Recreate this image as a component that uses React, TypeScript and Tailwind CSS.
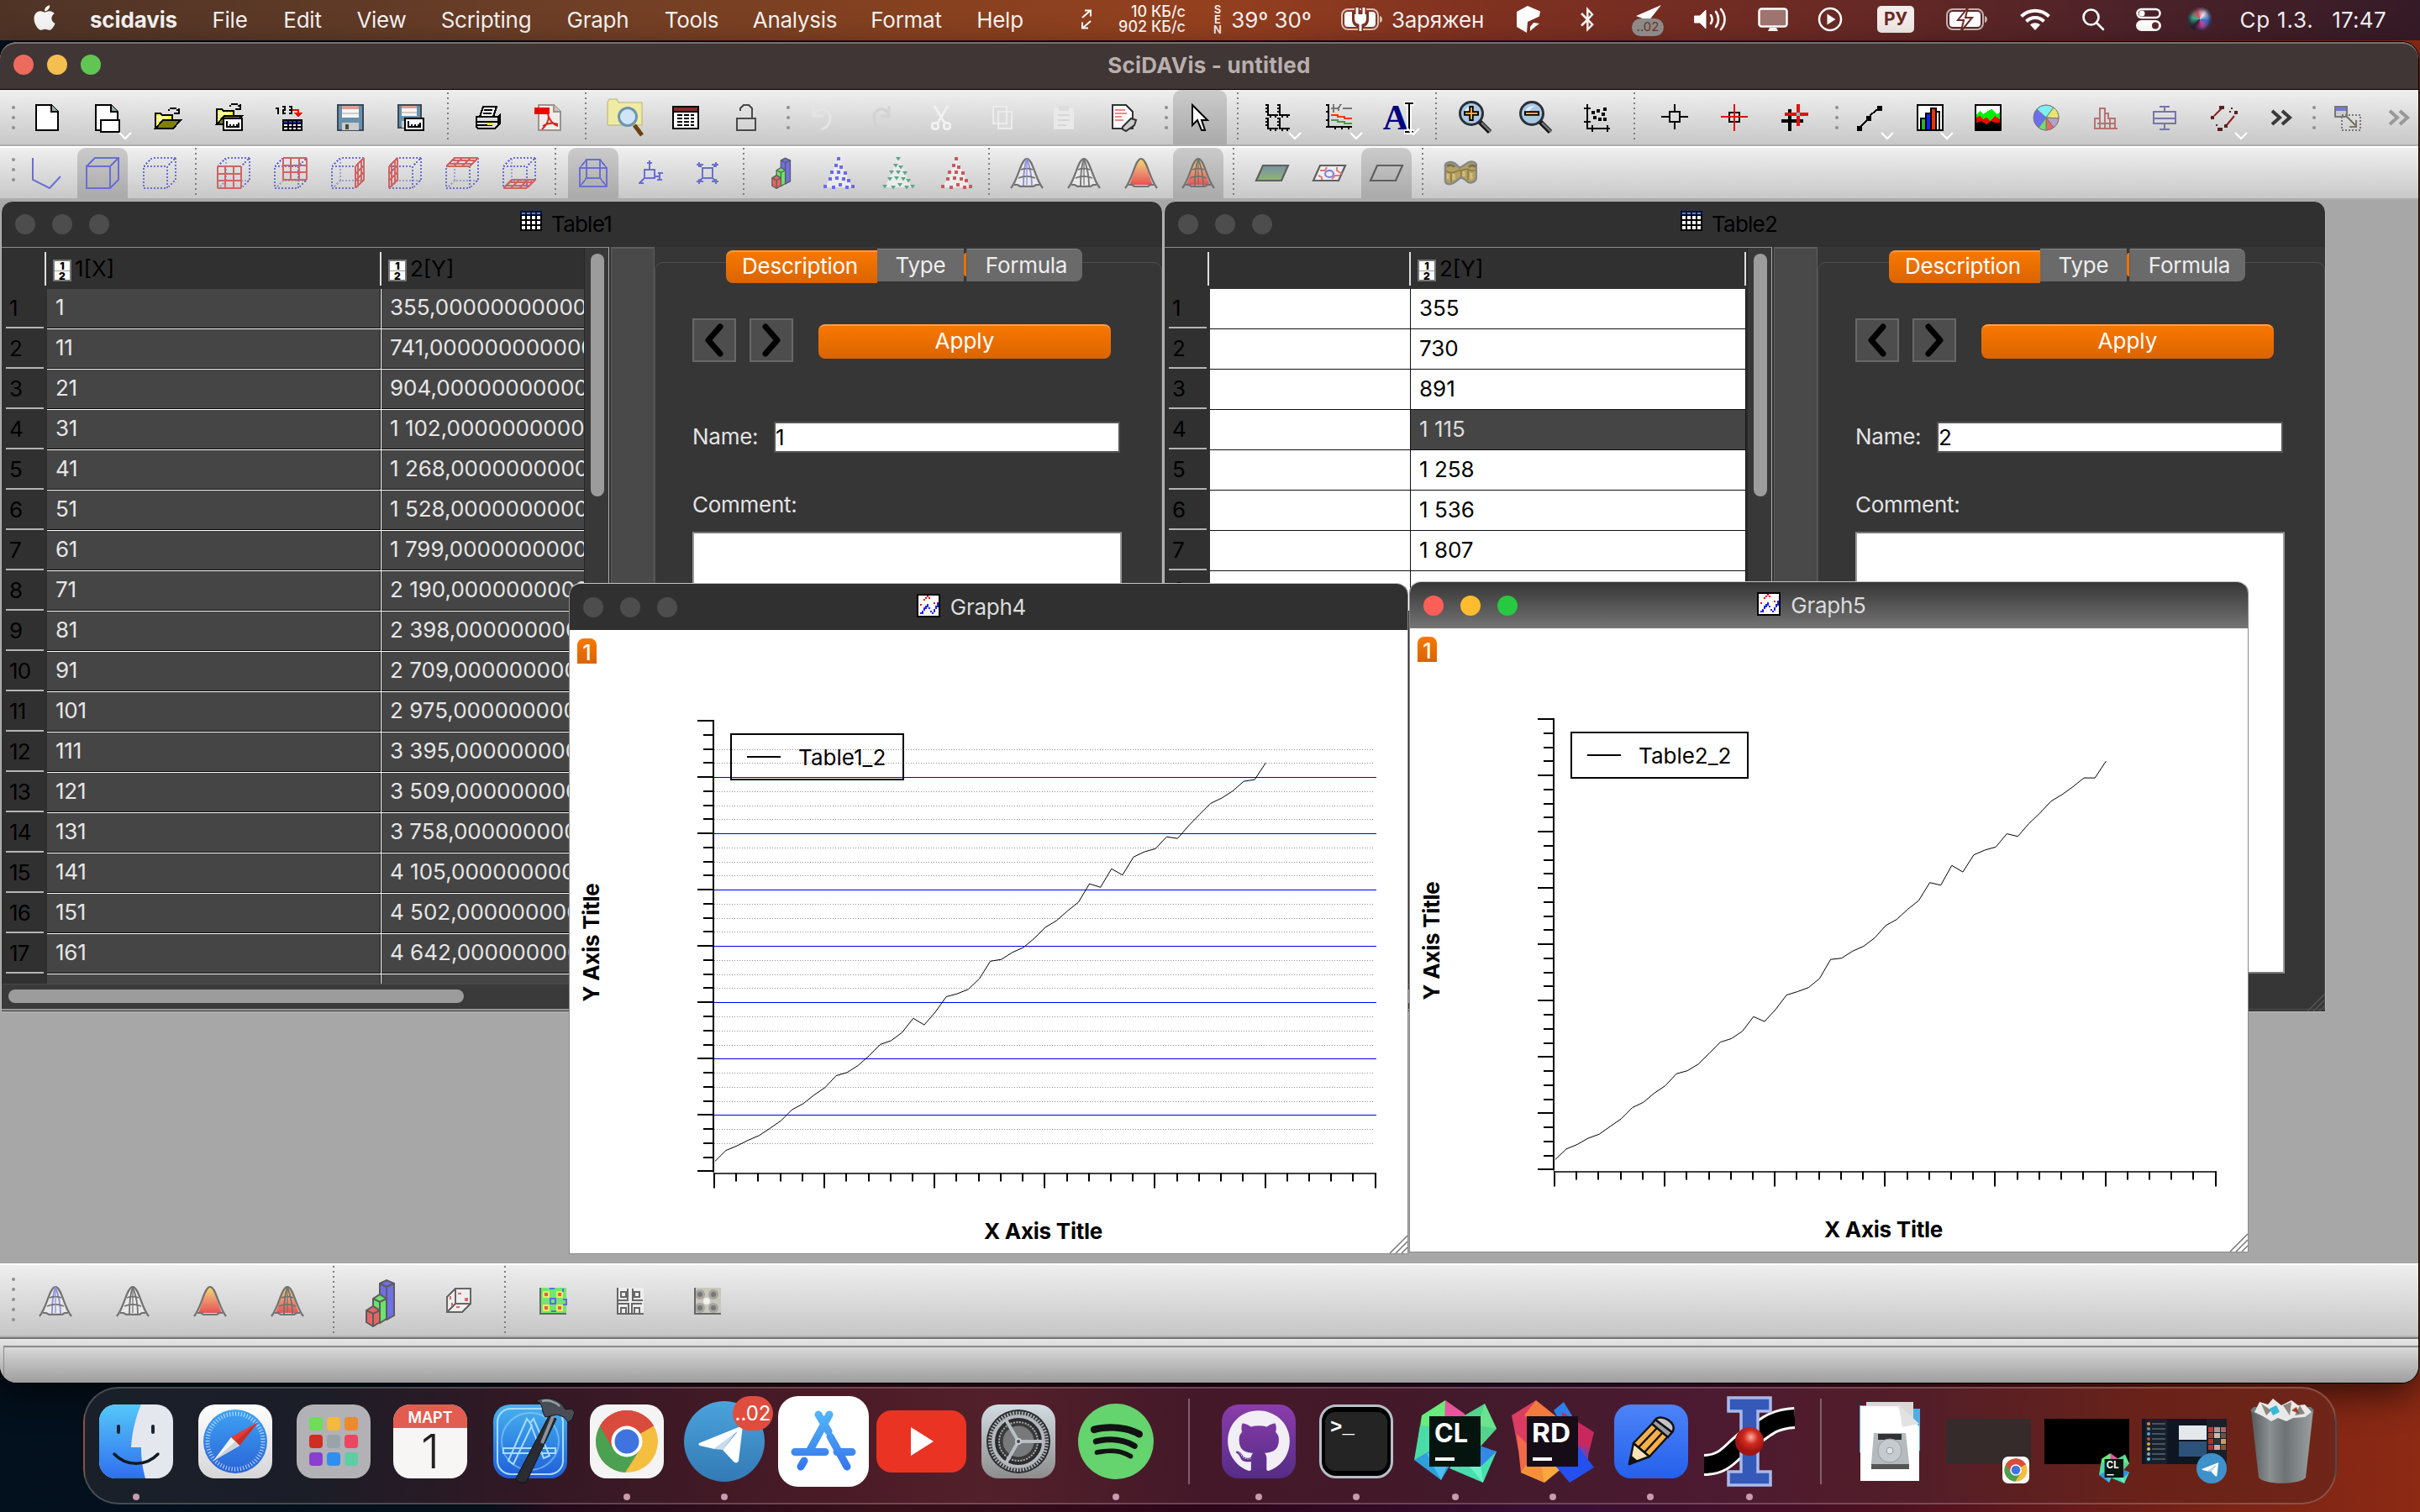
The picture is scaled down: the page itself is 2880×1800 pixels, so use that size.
import React from 'react';
import { FaApple, FaBluetoothB, FaGithub, FaSpotify, FaTelegramPlane } from 'react-icons/fa';

type Cell = [center: number, width: number, node: React.ReactNode];

/* A row whose items are spaced by their centres, in flow. */
function Strip({ items, className = '' }: { items: Cell[]; className?: string }) {
  let edge = 0;
  return (
    <div className={'flex h-full items-center ' + className}>
      {items.map(([c, w, node], i) => {
        const ml = c - w / 2 - edge;
        edge = c + w / 2;
        return (
          <div key={i} className="flex h-full shrink-0 items-center justify-center whitespace-nowrap" style={{ marginLeft: ml, width: w }}>
            {node}
          </div>
        );
      })}
    </div>
  );
}

/* ---------- menu bar ---------- */

const Plug = () => (
  <svg width="50" height="32" viewBox="0 0 50 32" fill="none">
    <rect x="1" y="4" width="43" height="24" rx="7" stroke="#d9c3bb" strokeWidth="2" />
    <rect x="4" y="7" width="37" height="18" rx="4" fill="#fff" />
    <path d="M46 12v8c4-1 4-7 0-8z" fill="#d9c3bb" />
    <path d="M19 0v10M27 0v10M16 10h14v6c0 5-3 7-7 7s-7-2-7-7zM23 22v10" stroke="#7a3220" strokeWidth="6" />
    <path d="M19 2v9M27 2v9M23 20v10" stroke="#fff" strokeWidth="3" />
    <path d="M16 10h14v5c0 5-3 7-7 7s-7-2-7-7z" fill="#fff" />
  </svg>
);
const Battery = () => (
  <svg width="50" height="28" viewBox="0 0 50 28" fill="none">
    <rect x="1" y="2" width="43" height="24" rx="7" stroke="#c9b1ad" strokeWidth="2" />
    <rect x="4" y="5" width="37" height="18" rx="4" fill="#fff" />
    <path d="M46 10v8c4-1 4-7 0-8z" fill="#c9b1ad" />
    <path d="M26 0L14 15h7l-3 13 13-16h-8z" fill="#fff" stroke="#6b2a24" strokeWidth="2" />
  </svg>
);
const Volume = () => (
  <svg width="40" height="28" viewBox="0 0 40 28" fill="none" stroke="#fff" strokeWidth="2.6" strokeLinecap="round">
    <path d="M1 10h6l7-7v22l-7-7H1z" fill="#fff" strokeWidth="1" strokeLinejoin="round" />
    <path d="M20 9c2 3 2 7 0 10M26 5c4 5 4 13 0 18M32 2c6 7 6 17 0 24" />
  </svg>
);
const Display = () => (
  <svg width="36" height="30" viewBox="0 0 36 30">
    <rect x="1.500" y="2.500" width="33" height="21" rx="3" fill="#fff" fillOpacity=".35" stroke="#fff" strokeWidth="2.500" />
    <path d="M12 29h12l-2-4h-8z" fill="#fff" />
  </svg>
);
const PlayCircle = () => (
  <svg width="30" height="30" viewBox="0 0 30 30">
    <circle cx="15" cy="15" r="13" fill="none" stroke="#fff" strokeWidth="2.500" />
    <path d="M11.500 8.500v13l10-6.500z" fill="#fff" />
  </svg>
);
const Wifi = () => (
  <svg width="38" height="28" viewBox="0 0 38 28" fill="none" stroke="#fff" strokeWidth="4">
    <path d="M2.500 10.500c9.500-9 23.500-9 33 0M8.500 16.500c6-6 15-6 21 0" />
    <path d="M19 27l-6-6.500c3.500-3 8.500-3 12 0z" fill="#fff" stroke="none" />
  </svg>
);
const Search = () => (
  <svg width="28" height="28" viewBox="0 0 28 28" fill="none" stroke="#fff" strokeWidth="2.700" strokeLinecap="round">
    <circle cx="11.500" cy="11.500" r="9" />
    <path d="M18 18l8 8" />
  </svg>
);
const Controls = () => (
  <svg width="30" height="28" viewBox="0 0 30 28">
    <rect x="1.500" y="2" width="27" height="10" rx="5" fill="none" stroke="#fff" strokeWidth="2.500" />
    <circle cx="7" cy="7" r="3.500" fill="#fff" />
    <rect x="0" y="15" width="30" height="13" rx="6.500" fill="#fff" />
    <circle cx="23" cy="21.500" r="4" fill="#5b2726" />
  </svg>
);
const Hex = () => (
  <svg width="30" height="32" viewBox="0 0 30 32" fill="#fff">
    <path d="M14 0l15 6.500-1 6L14 19l-1 13L1 25V7z" />
    <path d="M17 25l4-5 7 1-4 3-7 6z" />
  </svg>
);

function MenuBar() {
  const m = (s: string) => <span className="tracking-[-0.01em]">{s}</span>;
  const items: Cell[] = [
    [53, 30, <FaApple size={34} className="-mt-1" />],
    [159, 106, <span className="font-bold tracking-[-0.005em]">scidavis</span>],
    [273.5, 44, m('File')],
    [360, 48, m('Edit')],
    [454, 60, m('View')],
    [578.5, 110, m('Scripting')],
    [711.5, 74, m('Graph')],
    [823, 64, m('Tools')],
    [946, 100, m('Analysis')],
    [1078.5, 88, m('Format')],
    [1190, 56, m('Help')],
    [1293, 14, (
      <svg width="14" height="24" viewBox="0 0 14 24" fill="none" stroke="#fff" strokeWidth="2">
        <path d="M2 10L11 2M5 1.500h7v7M12 14L3 22M9 22.500H2v-7" />
      </svg>
    )],
    [1366, 90, (
      <div className="w-full text-right text-[18px] leading-[18px] font-medium">
        <div>10 КБ/с</div>
        <div>902 КБ/с</div>
      </div>
    )],
    [1449, 12, (
      <div className="text-center text-[13px] leading-[12px] font-semibold">
        <div>S</div><div>E</div><div>N</div>
      </div>
    )],
    [1513, 96, <span>39º 30º</span>],
    [1621, 50, <Plug />],
    [1711, 112, <span className="tracking-[-0.01em]">Заряжен</span>],
    [1819, 30, <Hex />],
    [1889, 22, <FaBluetoothB size={30} />],
    [1962, 40, (
      <div className="relative flex h-10 w-10 items-start justify-center">
        <svg width="34" height="28" viewBox="0 0 34 28"><path d="M32 3L2 16l8 3 3 8z" fill="#fff" /></svg>
        <span className="absolute bottom-0 left-0 flex h-[21px] w-[38px] items-center justify-center rounded-full bg-[#8d8a89] text-[15px] text-[#6d3328]">..02</span>
      </div>
    )],
    [2036, 40, <Volume />],
    [2110, 36, <Display />],
    [2178, 30, <PlayCircle />],
    [2256, 44, <span className="flex h-8 w-[44px] items-center justify-center rounded-[5px] bg-[#f3ecea] text-[21px] font-bold text-[#6b2a24]">РУ</span>],
    [2341, 50, <Battery />],
    [2422, 38, <Wifi />],
    [2491, 28, <Search />],
    [2557, 30, <Controls />],
    [2618, 30, <span className="h-[28px] w-[28px] rounded-full bg-[conic-gradient(from_40deg,#cfd8e8,#3b6fd0,#c7489a,#2a1f33,#3cb48a,#d04f5f,#eef)] shadow-[inset_0_0_5px_2px_#1d1a28]" />],
    [2709.5, 92, <span className="tracking-[0.03em]">Ср 1.3.</span>],
    [2807.5, 70, <span className="tracking-[0.01em]">17:47</span>],
  ];
  return (
    <div className="h-12 shrink-0 bg-[linear-gradient(90deg,#4f3426_0%,#5f3a27_14%,#6f3f26_24%,#86411f_38%,#94401f_50%,#823220_60%,#6b2a24_75%,#4c2229_88%,#351b27_100%)] text-[26px] text-white/95">
      <Strip items={items} className="pb-0.5" />
    </div>
  );
}

/* ---------- toolbar icons ---------- */

function Px({ children, s = 32, v = 16, h }: { children: React.ReactNode; s?: number; v?: number; h?: number }) {
  return (
    <svg width={s} height={h ?? s} viewBox={`0 0 ${v} ${h ? (v * h) / s : v}`} shapeRendering="crispEdges" fill="none" className="shrink-0 overflow-visible">
      {children}
    </svg>
  );
}
const Page = ({ x = 1, y = 0 }: { x?: number; y?: number }) => (
  <g transform={`translate(${x} ${y})`}>
    <path d="M.5 .5h9l4 4v11H.5z" fill="#fff" stroke="#000" />
    <path d="M9.500 .5v4h4" fill="#9aa" stroke="#000" />
  </g>
);
const Folder = () => (
  <g>
    <path d="M.5 14.500v-9h3l1 1h6v4" fill="#ffff44" stroke="#000" />
    <path d="M1 7h1v1H1zM3 7h1v1H3zM5 7h1v1H5zM7 7h1v1H7zM2 8h1v1H2zM4 8h1v1H4zM6 8h1v1H6zM1 9h1v1H1zM3 9h1v1H3zM1 11h1v1H1z" fill="#fff" />
    <path d="M.5 14.500L5 9.500h10.500L11 14.500z" fill="#808008" stroke="#000" />
    <path d="M8 3.500h1M9 2.500h4M13.500 3v1M14.500 2.500v3h-3" stroke="#000" />
  </g>
);
const Floppy = () => (
  <g>
    <path d="M.5 .5h15v15H.5z" fill="#6790ad" stroke="#3a4854" />
    <path d="M3 1h10v7H3z" fill="#f6f6f6" />
    <path d="M3 1h10v2H3z" fill="#e59b92" />
    <path d="M3 5.500h10" stroke="#ccc" />
    <path d="M3 11h10v4.500H3z" fill="#ccc" />
    <path d="M5 12h2v3H5z" fill="#4b4b3a" />
  </g>
);
const MiniPlot = () => (
  <g>
    <path d="M4.500 8.500h11v7h-11z" fill="#fff" stroke="#000" />
    <path d="M6.500 10v3.500H14M8.500 13v-1M10.500 13v-1M12.500 13v-1M13.500 13v-2" stroke="#000" />
  </g>
);
const Glass = ({ plus }: { plus: boolean }) => (
  <svg width="42" height="42" viewBox="0 0 42 42">
    <path d="M26 26l12 12" stroke="#111" strokeWidth="6" />
    <path d="M28 27l11 11" stroke="#6f7376" strokeWidth="2.500" />
    <circle cx="16" cy="16" r="13.500" fill="#a9c8e4" stroke="#2a3036" strokeWidth="3" />
    <path d="M8 20C6 12 12 6 20 7c-6 3-8 8-12 13z" fill="#e3eff8" />
    <path d="M7 16h18" stroke="#000" strokeWidth="5.500" />
    {plus && <path d="M16 7v18" stroke="#000" strokeWidth="5.500" />}
    <path d="M9 16h14" stroke="#f5ad35" strokeWidth="2" />
    {plus && <path d="M16 9v14" stroke="#f5ad35" strokeWidth="2" />}
  </svg>
);
const Handle = () => (
  <div className="flex flex-col gap-2">
    <i className="h-1 w-1 rounded-full bg-[#8f8f8f]" />
    <i className="h-1 w-1 rounded-full bg-[#8f8f8f]" />
    <i className="h-1 w-1 rounded-full bg-[#8f8f8f]" />
  </div>
);
const Sep = () => <div className="mb-1 h-14 w-0.5 bg-[repeating-linear-gradient(to_bottom,#7d7d7d_0_2px,transparent_2px_6px)]" />;
const Drop = ({ children }: { children: React.ReactNode }) => (
  <div className="relative flex items-center justify-center">
    {children}
    <svg className="absolute top-[33px] left-[28px]" width="16" height="10" viewBox="0 0 16 10">
      <path d="M1 1l7 7 7-7" fill="none" stroke="#fff" strokeWidth="2.200" />
    </svg>
  </div>
);
const On = ({ children }: { children: React.ReactNode }) => (
  <div className="flex h-full w-full items-center justify-center rounded-t-[10px] bg-black/15">{children}</div>
);
const More = ({ dim }: { dim?: boolean }) => (
  <svg width="28" height="20" viewBox="0 0 28 20" fill="none" stroke={dim ? '#999' : '#3a3a3a'} strokeWidth="4">
    <path d="M2 2l9 8-9 8M14 2l9 8-9 8" />
  </svg>
);

const toolbar1: Cell[] = [
  [16, 4, <Handle />],
  [56, 34, <Px><Page /></Px>],
  [129, 34, <Drop><Px><Page x={0} /><path d="M3.500 9.500h11v7h-11z" fill="#fff" stroke="#000" /></Px></Drop>],
  [200, 34, <Px><Folder /></Px>],
  [273, 34, <Px><g transform="translate(0 -2.500)"><Folder /></g><MiniPlot /></Px>],
  [344, 34, (
    <Px>
      <path d="M0 2.500h1.500V6M4 1.500h1.500v2H4.500V5.500H6M8 1.500h1.500V5.500H8M8 3.500h2" stroke="#000" />
      <path d="M10 3.500h3.500v2" stroke="#f00" /><path d="M11 5h5l-2.500 3z" fill="#f00" />
      <path d="M4.500 9.500h11v6h-11z" fill="#fff" stroke="#000" /><path d="M5 10h10v1H5z" fill="#33e" />
      <path d="M5 11.500h10M5 13.500h10M7.500 9v7M10 9v7M12.500 9v7" stroke="#000" />
    </Px>
  )],
  [417, 34, <Px><Floppy /></Px>],
  [489, 34, <Px><g transform="scale(.9)"><Floppy /></g><MiniPlot /></Px>],
  [533, 4, <Sep />],
  [580, 34, (
    <Px>
      <path d="M5.500 1.500h8l-2 6h-8z" fill="#fff" stroke="#000" /><path d="M6 3.500h5M5.500 5.500h5" stroke="#000" />
      <path d="M1.500 7.500h13v5l-2 2h-10l-1-1z" fill="#ddd" stroke="#000" /><path d="M2 10.500h12M2 12.500h9" stroke="#000" />
      <path d="M8 11h3v1.500H8z" fill="#ee0" /><path d="M14.500 7.500l1-1v5l-1 1" stroke="#000" />
    </Px>
  )],
  [652, 34, (
    <Px>
      <path d="M2.500 .5h9l4 4v11h-13z" fill="#f1eeea" stroke="#9b948c" /><path d="M11.500 .5v4h4" fill="#c9c2ba" stroke="#9b948c" />
      <path d="M0 2h9v4H0z" fill="#e00" />
      <path d="M8 6c1 4 3 6 6 7M8.500 7c0 4-2 6-4 8M5 13c3-2 6-2 9-1" stroke="#e02020" shapeRendering="auto" />
    </Px>
  )],
  [697, 4, <Sep />],
  [744, 48, (
    <svg width="46" height="46" viewBox="0 0 46 46">
      <path d="M2 32V5l2-4h9l2 4h28v27z" fill="#f0eba2" stroke="#b5b07a" />
      <circle cx="26" cy="22" r="10.500" fill="#cfe5f5" stroke="#6f94ae" strokeWidth="3" />
      <path d="M34 32l9 12" stroke="#6a4211" strokeWidth="5" />
    </svg>
  )],
  [816, 34, (
    <Px>
      <path d="M.5 1.500h15v13H.5z" fill="#fff" stroke="#000" /><path d="M1 2h14v2H1z" fill="#8a2a2a" />
      <path d="M1 4.500h14" stroke="#000" />
      <path d="M3 6.500h10M3 8.500h10M3 10.500h10M3 12.500h10" stroke="#000" strokeDasharray="3 1" />
    </Px>
  )],
  [888, 34, (
    <Px>
      <path d="M2.500 8.500h11v7h-11z" stroke="#4a4a4a" /><path d="M4.500 4V2.500l2-2h3l2 2v6" stroke="#4a4a4a" />
    </Px>
  )],
  [938, 4, <Handle />],
  [978, 34, <Px><path d="M3 1v6h6M3 6c5-6 10-2 10 2 0 4-2 6-5 7" stroke="#e4e4e4" shapeRendering="auto" strokeWidth="1.500" /></Px>],
  [1048, 34, <Px><path d="M13 1v6H8M13 6C9 0 4 4 4 8c0 4 2 6 5 7" stroke="#d3d3d3" shapeRendering="auto" strokeWidth="1.500" /></Px>],
  [1120, 34, <Px><path d="M4 1l6 10M12 1L6 11" stroke="#f0f0f0" strokeWidth="1.500" /><circle cx="4.500" cy="13" r="2" stroke="#f0f0f0" strokeWidth="1.500" /><circle cx="11.500" cy="13" r="2" stroke="#f0f0f0" strokeWidth="1.500" /></Px>],
  [1193, 34, <Px><path d="M2.500 1.500h8v10h-8zM5.500 4.500h8v10h-8z" fill="#dcdcdc" stroke="#ececec" /></Px>],
  [1266, 34, <Px><path d="M2 2h12v13H2z" fill="#e9e9e9" /><path d="M5 1h6v3H5z" fill="#ddd" /><path d="M4.500 6.500h7M4.500 9.500h7M4.500 12.500h5" stroke="#d6d6d6" /></Px>],
  [1337, 34, (
    <Px>
      <path d="M1.500 .5h8l4 4v10h-12z" fill="#fff" stroke="#333" /><path d="M3 3.500h6M3 5.500h7M3 7.500h4M3 9.500h5" stroke="#e88" />
      <path d="M7.500 13.500l5-5 3 1-1 3-5 3.500-2-1z" fill="#ccc" stroke="#333" shapeRendering="auto" />
    </Px>
  )],
  [1388, 4, <Handle />],
  [1428, 64, <On><Px><path d="M3.500 .5v12l3-3 2.500 6h2L9 9.500h3.500z" fill="#fff" stroke="#000" shapeRendering="auto" /></Px></On>],
  [1473, 4, <Sep />],
  [1521, 34, (
    <Drop>
      <Px>
        {([[0, 0], [7, 0], [0, 8], [7, 8]] as [number, number][]).map(([x, y]) => (
          <path key={`${x}-${y}`} transform={`translate(${x} ${y})`} d="M2 0v6.500h6M.5 .5h1M.5 2.500h1M.5 4.500h1M3.500 7v1M6.500 7v1" stroke="#000" strokeWidth="1.200" />
        ))}
      </Px>
    </Drop>
  )],
  [1594, 34, (
    <Drop>
      <Px>
        <path d="M1.500 0v14M0 13.500h15.500M0 .5h2M0 4.500h2M0 9.500h2M5.500 13v2M9.500 13v2M13.500 13v2" stroke="#000" />
        <path d="M3 2.500h5M4.500 0v5M7.500 4V2l1.500-2M10 2.500h5.500" stroke="#777" />
        <path d="M3 6.500h4v1h4v1h4.500" stroke="#f30" strokeWidth="1.200" /><path d="M3 9.500h4v1h4v1h4.500" stroke="#4b9a45" strokeWidth="1.200" />
      </Px>
    </Drop>
  )],
  [1665, 40, (
    <Drop>
      <div className="flex items-center">
        <span className="font-['Liberation_Serif'] text-[42px] leading-[36px] font-bold text-[#000080]">A</span>
        <svg className="-ml-1.5" width="14" height="42" viewBox="0 0 14 42"><path d="M1 4h12M7 4v34M1 38h12" stroke="#fff" strokeWidth="6" /><path d="M2 4h10M7 4v34M2 38h10" stroke="#000" strokeWidth="2" /></svg>
      </div>
    </Drop>
  )],
  [1709, 4, <Sep />],
  [1756, 42, <Glass plus />],
  [1828, 42, <Glass plus={false} />],
  [1900, 34, (
    <Px>
      <path d="M2.500 1v10M.5 2.500h4M2 .5h1M.5 10.500h4M2.500 11v3.500H16M5.500 12.500v4M14.500 12.500v4" stroke="#000" />
      <path d="M5 4h2v2H5zM8 3h2v2H8zM12 2h2v2h-2zM6 7h2v2H6zM9 8h2v2H9zM11 5h2v2h-2zM12 8h2v2h-2z" fill="#000" />
    </Px>
  )],
  [1945, 4, <Sep />],
  [1993, 34, <Px><path d="M5 4.500h6v6H5z" fill="#ddd" stroke="#000" strokeWidth="1.200" /><path d="M8 0v4.500M8 10.500V15M0 7.500h5M11 7.500h5" stroke="#000" /></Px>],
  [2064, 34, <Px><path d="M5 5h6v5.500H5z" fill="#ddd" stroke="#000" /><path d="M8 0v16M0 7.500h16" stroke="#e01010" /></Px>],
  [2136, 34, <Px><path d="M5 3v13M0 10h13" stroke="#000" strokeWidth="2" /><path d="M10 0v13M2 6h14" stroke="#e01010" strokeWidth="2" /><path d="M9 5h2v2H9z" fill="#6cc" /></Px>],
  [2186, 4, <Handle />],
  [2226, 34, <Drop><Px><path d="M1.500 14L7 8.500l1-2L13.500 2" stroke="#000" /><path d="M0 13h3v3H0zM5.500 7h3v3h-3zM12 1h3v3h-3z" fill="#000" /></Px></Drop>],
  [2297, 34, <Drop><Px><path d="M.5 .5h15v15H.5z" fill="#fff" stroke="#000" /><path d="M2.500 8.500h3v7h-3z" fill="#3a3" stroke="#000" /><path d="M5.500 5.500h3v10h-3z" fill="#12f" stroke="#000" /><path d="M8.500 2.500h3v13h-3z" fill="#e30" stroke="#000" /><path d="M11.500 4.500h2v11h-2z" fill="#fff" stroke="#000" /></Px></Drop>],
  [2366, 34, <Px><path d="M.5 .5h15v15H.5z" fill="#fff" stroke="#000" /><path d="M1 15V6l2-2 2 2 3-2 2-1 3 3 2-1v10z" fill="#0e0" /><path d="M1 15V8l2-1 2 2 2-1 2 2 3-3 3 2v6z" fill="#f00" /><path d="M1 15v-4l3-1 3 2 3-2 2 1 3 0v4z" fill="#000" /></Px>],
  [2435, 34, (
    <svg width="32" height="32" viewBox="0 0 32 32" stroke="#777">
      <circle cx="16" cy="16" r="15" fill="#6e6ef0" />
      <path d="M16 16L5 6A15 15 0 0 1 25 4z" fill="#7ef0f5" />
      <path d="M16 16l9-12a15 15 0 0 1 6 13z" fill="#e9e66f" />
      <path d="M16 16l15 1a15 15 0 0 1-6 11z" fill="#b9a0c8" />
      <path d="M16 16l9 12a15 15 0 0 1-9 3z" fill="#f06464" />
      <path d="M16 16v15a15 15 0 0 1-9-3z" fill="#6de06d" />
    </svg>
  )],
  [2506, 34, <Px><path d="M1.500 14.500v-6h3v-6h3v3h2v3h4v6z" stroke="#b77272" /><path d="M4.500 8v6.500M7.500 5v9.500M10.500 8v6.500M1 14.500h14M3 11.500h10" stroke="#b77272" /></Px>],
  [2576, 34, <Px><path d="M1.500 4.500h13v7h-13zM1.500 8.500h13M8 1v3.500M8 11.500v3.500M5 1.500h6M5 15h6" stroke="#7575ad" /></Px>],
  [2647, 34, <Drop><Px><path d="M2 7L7 2M9 13l5-6" stroke="#822" shapeRendering="auto" /><path d="M0 7h2v2H0zM4 14h3v2H4zM5 1h3v2H5zM14 4h2v2h-2zM8 12h2v2H8zM11 4h1v1h-1zM12 2h1v1h-1zM3 12h1v1H3z" fill="#522" /></Px></Drop>],
  [2716, 28, <More />],
  [2754, 4, <Handle />],
  [2794, 34, <Px><path d="M.5 1.500h7v6h-7z" fill="#ccc" stroke="#777" /><path d="M1 2h6v2H1z" fill="#77d" /><path d="M4.500 6.500h11v9h-11z" stroke="#777" strokeDasharray="1 1" /><path d="M8 8l5 5M13 9.500v4H9" stroke="#776" /></Px>],
  [2856, 28, <More dim />],
];

const BLUE = '#6a6fd0';
const RED = '#cf6464';
const CubeSvg = ({ children, dotted }: { children?: React.ReactNode; dotted?: boolean }) => (
  <svg width="40" height="38" viewBox="0 0 20 19" fill="none" shapeRendering="crispEdges">
    <path d="M.5 5.500h14v13H.5zM.5 5.500l5-5h14l-5 5M19.500 .5v13l-5 5" stroke={BLUE} strokeDasharray={dotted ? '1 1' : undefined} />
    {dotted && children && <path d="M5.500 1v13h14M5.500 14l-5 5" stroke={BLUE} strokeOpacity=".55" strokeDasharray="1 1" />}
    {children}
  </svg>
);
type P = [number, number];
/* A 3x3 grid on the parallelogram at o spanned by u and v. */
const Face = ({ o, u, v }: { o: P; u: P; v: P }) => (
  <g stroke={RED} strokeWidth="1">
    {[0, 1, 2, 3].map((k) => {
      const t = k / 3;
      return (
        <g key={k}>
          <line x1={o[0] + u[0] * t} y1={o[1] + u[1] * t} x2={o[0] + u[0] * t + v[0]} y2={o[1] + u[1] * t + v[1]} />
          <line x1={o[0] + v[0] * t} y1={o[1] + v[1] * t} x2={o[0] + v[0] * t + u[0]} y2={o[1] + v[1] * t + u[1]} />
        </g>
      );
    })}
  </g>
);

const Cone = ({ fill, mesh, blue, id }: { fill?: boolean; mesh?: boolean; blue?: boolean; id: string }) => (
  <svg width="40" height="38" viewBox="0 0 40 38" fill="none">
    <defs>
      <linearGradient id={id} x1="0" y1="0" x2="0" y2="1">
        <stop offset="0" stopColor="#f2dc6a" /><stop offset=".45" stopColor="#ee9a72" /><stop offset="1" stopColor="#e85252" />
      </linearGradient>
    </defs>
    <path d="M6 33C11 24 13 2 20 2s9 22 14 31z" fill={fill ? `url(#${id})` : '#e9e9e9'} />
    <path d="M1 37C10 26 13 2 20 2s10 24 19 35M5 33h4l3 2h16l3-2h4" stroke="#727272" strokeWidth="2.200" />
    {mesh && (
      <g stroke={blue ? '#8d8dd8' : '#727272'} strokeWidth="1.800">
        <path d="M16 34c0-12 1-24 4-32M26 34c0-12-3-24-6-32" />
        <path d="M10 25c7-3 13-3 20 0M13 15c5-2 9-2 14 0" stroke="#727272" />
        <path d="M20 2v31" strokeOpacity=".7" />
      </g>
    )}
  </svg>
);
const ScatterCone = ({ c, tri }: { c: string; tri?: boolean }) => (
  <svg width="40" height="42" viewBox="0 0 40 42">
    <path d="M20 3C14 12 10 30 3 38h34C30 30 26 12 20 3z" fill="#ebebeb" />
    {([[20, 4], [17, 12], [23, 14], [12, 20], [20, 20], [28, 21], [10, 28], [18, 27], [26, 28], [32, 30], [4, 37], [14, 38], [22, 35], [30, 38], [37, 37]] as P[]).map(([x, y], i) =>
      tri ? <path key={i} d={`M${x - 3} ${y - 2}h6l-3 4.500z`} fill={c} /> : <rect key={i} x={x - 2} y={y - 2} width="4" height="4" fill={c} />,
    )}
  </svg>
);
const Bars3d = ({ big }: { big?: boolean }) => (
  <svg width={big ? 36 : 26} height={big ? 58 : 38} viewBox="0 0 36 58" stroke="#5c5c5c" strokeWidth="2">
    <path d="M17 6l8-4 9 4v38l-9 5-8-5z" fill="#6f6fe8" /><path d="M17 6l8 4 9-4M25 10v38" fill="none" />
    <path d="M9 24l8-5 8 5v24l-8 5-8-5z" fill="#69e569" /><path d="M9 24l8 4 8-4M17 28v24" fill="none" />
    <path d="M1 38l8-5 8 5v14l-8 5-8-5z" fill="#e86464" /><path d="M1 38l8 4 8-4M9 42v14" fill="none" />
  </svg>
);
const Plane = ({ kind, id }: { kind?: 'fill' | 'iso'; id: string }) => (
  <svg width="42" height="22" viewBox="0 0 42 22">
    <defs>
      <linearGradient id={id} x1="0" y1="0" x2="0" y2="1"><stop offset="0" stopColor="#7890a8" /><stop offset="1" stopColor="#8fb573" /></linearGradient>
    </defs>
    <path d="M2 20L10 2h30l-8 18z" fill={kind === 'fill' ? `url(#${id})` : kind === 'iso' ? '#eee' : 'none'} stroke="#5f5f5f" strokeWidth="2.200" />
    {kind === 'iso' && (
      <g fill="none" strokeWidth="2">
        <ellipse cx="21" cy="12" rx="5" ry="4" stroke="#7a7ae0" />
        <path d="M10 8h6l2-4M30 4v4l6 4M8 14l4 2v3M24 18l4-4h6" stroke="#e07a7a" />
      </g>
    )}
  </svg>
);

const toolbar2: Cell[] = [
  [16, 4, <div className="mb-2"><Handle /></div>],
  [55, 36, <svg width="36" height="38" viewBox="0 0 36 38" fill="none" stroke={BLUE} strokeWidth="2"><path d="M2 1v26l20 10L35 23" /></svg>],
  [122, 60, <On><CubeSvg /></On>],
  [190, 42, <CubeSvg dotted />],
  [233, 4, <Sep />],
  [278, 42, <CubeSvg dotted><Face o={[0.5, 5.5]} u={[14, 0]} v={[0, 13]} /></CubeSvg>],
  [346, 42, <CubeSvg dotted><Face o={[5.5, 0.5]} u={[14, 0]} v={[0, 13]} /></CubeSvg>],
  [414, 42, <CubeSvg dotted><Face o={[14.5, 5.5]} u={[5, -5]} v={[0, 13]} /></CubeSvg>],
  [482, 42, <CubeSvg dotted><Face o={[0.5, 5.5]} u={[5, -5]} v={[0, 13]} /></CubeSvg>],
  [550, 42, <CubeSvg dotted><Face o={[0.5, 5.5]} u={[14, 0]} v={[5, -5]} /></CubeSvg>],
  [618, 42, <CubeSvg dotted><Face o={[0.5, 18.5]} u={[14, 0]} v={[5, -5]} /></CubeSvg>],
  [661, 4, <Sep />],
  [706, 60, (
    <On>
      <svg width="34" height="34" viewBox="0 0 17 17" fill="none" stroke={BLUE} shapeRendering="crispEdges">
        <path d="M.5 5.500h16v11H.5zM.5 5.500l4-5h8l4 5M4.500 .5v11h8V.5M4.500 11.500l-4 5M12.500 11.500l4 5" />
      </svg>
    </On>
  )],
  [775, 32, <svg width="30" height="30" viewBox="0 0 15 15" fill="none" stroke={BLUE} shapeRendering="crispEdges"><path d="M3.500 5.500h6v5h-6zM6.500 0v5M5 1.500h3M9.500 9.500h3M12.500 8v4M11 11.500h3M3.500 10.500l-3 3M0 13.500h3M11.500 7.500h3" /></svg>],
  [842, 28, <svg width="26" height="26" viewBox="0 0 13 13" fill="none" stroke={BLUE} shapeRendering="crispEdges"><path d="M3.500 3.500h6v6h-6z" /><path d="M0 1.500h4M1.500 0v3M9 1.500h4M11.500 0v3M0 11.500h4M1.500 10v3M9 11.500h4M11.500 10v3M3 3L1 1M10 3l2-2M3 10l-2 2M10 10l2 2" /></svg>],
  [885, 4, <Sep />],
  [930, 30, <Bars3d />],
  [998, 42, <ScatterCone c="#6a6aec" />],
  [1069, 42, <ScatterCone c="#5aa68a" tri />],
  [1138, 42, <ScatterCone c="#c85a5a" />],
  [1177, 4, <Sep />],
  [1222, 42, <Cone id="c1" mesh blue />],
  [1290, 42, <Cone id="c2" mesh />],
  [1358, 42, <Cone id="c3" fill />],
  [1426, 60, <On><Cone id="c4" fill mesh /></On>],
  [1468, 4, <Sep />],
  [1514, 42, <Plane id="p1" kind="fill" />],
  [1582, 42, <Plane id="p2" kind="iso" />],
  [1650, 60, <On><Plane id="p3" /></On>],
  [1693, 4, <Sep />],
  [1738, 42, (
    <svg width="40" height="30" viewBox="0 0 40 30" strokeLinejoin="round">
      <path d="M2 5c2-4 10-4 13 0l4 4 8-5c4-4 10-3 12 1v16c-2 6-9 7-12 3l-6-4-8 6c-4 3-10 3-11-1z" fill="#b5a162" stroke="#878787" strokeWidth="2.500" />
      <path d="M3 12c4 4 8 3 12 1M15 13l14-3M29 10c3 3 6 3 9 1M9 16v10M21 12v8M29 10v13" stroke="#8a7a45" strokeWidth="1.500" fill="none" />
      <path d="M4 7c3-2 7-2 9 1M30 8c2-3 6-3 8 0" stroke="#77705a" strokeWidth="3" fill="none" />
      <path d="M12 16v7M24 13v6M33 15v7M5 16v6" stroke="#d3c07c" strokeWidth="3" />
    </svg>
  )],
];

const toolbar3: Cell[] = [
  [16, 4, <div className="mb-1 flex flex-col gap-2">{[0, 1, 2, 3, 4].map((i) => <i key={i} className="h-1 w-1 rounded-full bg-[#8f8f8f]" />)}</div>],
  [66, 42, <Cone id="d1" mesh blue />],
  [158, 42, <Cone id="d2" mesh />],
  [250, 42, <Cone id="d3" fill />],
  [342, 42, <Cone id="d4" fill mesh />],
  [397, 4, <div className="mb-1 h-20 w-0.5 bg-[repeating-linear-gradient(to_bottom,#7d7d7d_0_2px,transparent_2px_6px)]" />],
  [453, 36, <div className="mt-1"><Bars3d big /></div>],
  [547, 32, <Px s={32}><path d="M.5 5.500l5-5h9v9l-5 5h-9z" fill="#eee" stroke="#666" /><path d="M5.500 .5v9h9M5.500 9.500l-5 5" stroke="#666" /><path d="M7 3h2v1H7zM11 6h2v2h-2zM2 5h1v2H2zM3 9h1v2H3zM6 11h2v1H6z" fill="#d66" /></Px>],
  [601, 4, <div className="mb-1 h-20 w-0.5 bg-[repeating-linear-gradient(to_bottom,#7d7d7d_0_2px,transparent_2px_6px)]" />],
  [658, 34, (
    <Px><path d="M0 0h16v15H0z" fill="#6ee86e" />
      {([[4, 4], [12, 4], [4, 12], [12, 12]] as P[]).map(([x, y], i) => <g key={i}><path d={`M${x - 2} ${y - 2}h4v4h-4z`} fill="#f0e95c" /><path d={`M${x - 1} ${y - 1}h2v2h-2z`} fill="#e55" /></g>)}
      <path d="M6.500 6.500h3v3h-3zM6 .5h3M14 .5v2M14 7h2v3h-2M7 14h3" stroke="#66e" /><path d="M.5 0v15.500H16" stroke="#666" />
    </Px>
  )],
  [750, 34, (
    <Px><path d="M0 0h16v15H0z" fill="#eee" />
      <path d="M2.500 2.500h3v3h-3zM10.500 2.500h3v3h-3zM.5 7.500h6V.5M15.500 7.500h-6V.5M2.500 15v-3h3v3M10.500 15v-3h3v3M1 9.500h6V15M15 9.500H9V15" stroke="#666" /><path d="M.5 0v15.500H16" stroke="#666" />
    </Px>
  )],
  [842, 34, (
    <svg width="32" height="32" viewBox="0 0 32 32">
      <rect width="32" height="30" fill="#c9c8bb" />
      <g fill="#a4a4a0"><circle cx="7" cy="8" r="6" /><circle cx="23" cy="8" r="6" /><circle cx="7" cy="24" r="6" /><circle cx="23" cy="24" r="6" /></g>
      <g fill="#777"><circle cx="7" cy="8" r="3" /><circle cx="23" cy="8" r="3" /><circle cx="7" cy="24" r="3" /><circle cx="23" cy="24" r="3" /></g>
      <circle cx="15" cy="16" r="4" fill="#f2f2ee" /><path d="M1 0v31h31" stroke="#666" strokeWidth="2" fill="none" />
    </svg>
  )],
];

/* ---------- table windows ---------- */

const GreyDots = () => (
  <div className="flex gap-5">
    <i className="h-6 w-6 rounded-full bg-[#4d4d4d]" />
    <i className="h-6 w-6 rounded-full bg-[#4d4d4d]" />
    <i className="h-6 w-6 rounded-full bg-[#4d4d4d]" />
  </div>
);
const TableIcon = () => (
  <svg width="26" height="24" viewBox="0 0 26 24" shapeRendering="crispEdges">
    <rect width="26" height="24" fill="#000" /><rect x="0" y="0" width="26" height="5" fill="#06103c" />
    {[0, 1, 2, 3].map((c) => [0, 1, 2, 3].map((r) => <rect key={c + '-' + r} x={2 + c * 6} y={r === 0 ? 2 : r * 6} width="4" height={r === 0 ? 2 : 4} fill={r === 0 ? '#5f86b8' : '#fff'} />))}
  </svg>
);
const NumIcon = () => (
  <span className="flex h-[26px] w-[22px] shrink-0 flex-col items-center border-2 border-[#777] bg-white text-[12px] leading-[11px] font-black text-black">
    <span>1</span><span className="w-full border-t border-[#999] text-center">2</span>
  </span>
);

type TableProps = { title: string; name: string; children: React.ReactNode; place: string };

function TableWindow({ title, name, children, place }: TableProps) {
  return (
    <div className={'absolute flex h-[966px] w-[1383px] flex-col overflow-hidden rounded-t-[14px] border border-[#b9b9b9] bg-[#303030] text-[26px] ' + place}>
      <div className="relative flex h-[54px] shrink-0 items-center justify-center">
        <div className="absolute left-[16px]"><GreyDots /></div>
        <div className="mr-[38px] flex items-center gap-[11px] text-black"><span className="mb-2"><TableIcon /></span><span className="pb-0.5 tracking-[-0.03em]">{title}</span></div>
      </div>
      <div className="flex min-h-0 flex-1">
        <div className="flex w-[723px] shrink-0 flex-col border-t border-r border-[#8a8a8a] border-r-[#b0b0b0]">
          <div className="flex min-h-0 flex-1">
            <div className="w-[693px] shrink-0 overflow-hidden">{children}</div>
            <div className="flex flex-1 justify-center border-l border-[#262626] bg-[#383838] pt-[7px] pl-px">
              <div className="h-[289px] w-4 rounded-full bg-[#9c9c9c]" />
            </div>
          </div>
          <div className="flex h-[30px] shrink-0 items-center border-t border-[#4a4a4a] bg-[#3a3a3a] pb-px pl-2">
            <div className="h-4 w-[542px] rounded-full bg-[#9c9c9c]" />
          </div>
          <div className="h-[3px] shrink-0 border-t-2 border-[#9a9a9a]" />
        </div>
        <div className="ml-0.5 w-[52px] shrink-0 border-x border-t-2 border-[#5d5d5d] bg-[#494949]" />
        <div className="flex flex-1 flex-col bg-[#363636]">
          <div className="z-10 ml-[85px] flex h-[43px] shrink-0 items-start pt-px text-[#eee]">
            <div className="mt-[3px] flex h-[39px] w-[180px] items-center justify-center rounded-l-[8px] border-t-2 border-[#ff9a3a] bg-gradient-to-b from-[#f77800] to-[#da6400] pr-1 pb-1 text-white tracking-[-0.01em]">Description</div>
            <div className="mt-px flex h-[39px] w-[103px] items-center justify-center border-t border-[#858585] bg-[#6a6a6a] pb-0.5 tracking-[-0.01em]">Type</div>
            <div className="mt-1.5 h-7 w-[3px] rounded-l-full bg-[#ee7000]" />
            <div className="mt-px flex h-[39px] w-[138px] items-center justify-center rounded-r-[8px] border-t border-l border-[#858585] border-l-[#5d5d5d] bg-[#6a6a6a] pb-0.5 pl-1 tracking-[-0.01em]">Formula</div>
          </div>
          <div className="-mt-[25px] flex h-[890px] flex-col rounded-t-[10px] border border-[#4e4e4e] pt-[66px] pl-[44px] text-[#e4e4e4]">
            <div className="flex items-center">
              {[true, false].map((left) => (
                <span key={String(left)} className="mr-4 flex h-[52px] w-[52px] items-center justify-center border-2 border-[#686868] bg-[#4d4d4d]">
                  <svg width="26" height="42" viewBox="0 0 26 42" fill="none" stroke="#000" strokeWidth="7" strokeLinecap="round" strokeLinejoin="round">
                    <path d={left ? 'M20 5L6 21l14 16' : 'M6 5l14 16L6 37'} />
                  </svg>
                </span>
              ))}
              <span className="mt-0.5 ml-[14px] flex h-[41px] w-[348px] items-center justify-center rounded-[8px] border-t-2 border-[#ffa04a] bg-gradient-to-b from-[#f77800] to-[#da6400] pb-1 text-white">Apply</span>
            </div>
            <div className="mt-[69px] flex items-center">
              <span className="w-[97px] pb-px tracking-[-0.01em]">Name:</span>
              <span className="flex h-[37px] w-[412px] items-center border-2 border-[#555] bg-white text-black">{name}</span>
            </div>
            <div className="mt-[41px] h-[40px] leading-[40px] tracking-[-0.01em]">Comment:</div>
            <div className="mt-[12px] h-[526px] w-[511px] border-2 border-[#777] border-x-[#999] bg-white" />
          </div>
        </div>
      </div>
      <svg className="absolute right-0 bottom-0" width="22" height="22" viewBox="0 0 22 22" stroke="#555" strokeWidth="1.500"><path d="M1 22L22 1M8 22L22 8M15 22l7-7" /></svg>
    </div>
  );
}

const RowHead = ({ n }: { n: number }) => (
  <div className="flex w-[54px] shrink-0 flex-col pr-1 pl-[5px]">
    <div className="flex h-[45px] items-center pb-px pl-[4px] text-black tracking-[-0.03em]">{n}</div>
    <div className="h-0.5 bg-[#b5b5b5]" />
  </div>
);

const t1Rows: [string, string][] = [
  ['1', '355,000000000000'], ['11', '741,000000000000'], ['21', '904,000000000000'], ['31', '1 102,00000000000'],
  ['41', '1 268,00000000000'], ['51', '1 528,00000000000'], ['61', '1 799,00000000000'], ['71', '2 190,00000000000'],
  ['81', '2 398,00000000000'], ['91', '2 709,00000000000'], ['101', '2 975,00000000000'], ['111', '3 395,00000000000'],
  ['121', '3 509,00000000000'], ['131', '3 758,00000000000'], ['141', '4 105,00000000000'], ['151', '4 502,00000000000'],
  ['161', '4 642,00000000000'],
];
const t2Rows = ['355', '730', '891', '1 115', '1 258', '1 536', '1 807', ''];

function Table1() {
  return (
    <TableWindow title="Table1" name="1" place="left-px top-px">
      <div className="flex h-[49px] items-center">
        <div className="h-[40px] w-[53px] border-r-2 border-[#ddd]" />
        <div className="flex h-[40px] w-[399px] items-center gap-1 border-r-2 border-[#ddd] pt-1 pl-[8px] text-black"><NumIcon /><span className="pb-1">1[X]</span></div>
        <div className="flex items-center gap-1 pt-1 pl-[8px] text-black"><NumIcon /><span className="pb-1">2[Y]</span></div>
      </div>
      {t1Rows.map(([x, y], i) => (
        <div key={x} className="flex h-12">
          <RowHead n={i + 1} />
          <div className="flex w-[398px] shrink-0 border-b border-white">
            <div className="flex h-[47px] flex-1 items-center border-r border-b border-[#0a0a0a] bg-[#454545] pb-[3px] pl-[10px] text-[#e6e6e6] tracking-[-0.01em]">{x}</div>
            <div className="w-px bg-white" />
          </div>
          <div className="flex flex-1 border-b border-white">
            <div className="flex h-[47px] flex-1 items-center overflow-hidden border-b border-[#0a0a0a] bg-[#454545] pb-[3px] pl-[10px] whitespace-nowrap text-[#e6e6e6]">{y}</div>
          </div>
        </div>
      ))}
      <div className="flex h-3">
        <div className="w-[54px]" />
        <div className="w-[397px] border-r border-[#0a0a0a] bg-[#454545]" />
        <div className="flex-1 border-l border-white bg-[#454545]" />
      </div>
    </TableWindow>
  );
}

function Table2() {
  return (
    <TableWindow title="Table2" name="2" place="left-[1385px] top-px">
      <div className="flex h-[49px] items-center">
        <div className="h-[40px] w-[53px] border-r-2 border-[#ddd]" />
        <div className="h-[40px] w-[240px] border-r-2 border-[#ddd]" />
        <div className="flex h-[40px] w-[399px] items-center gap-1 border-r-2 border-[#ddd] pt-1 pl-[8px] text-black"><NumIcon /><span className="pb-1">2[Y]</span></div>
      </div>
      {t2Rows.map((y, i) => (
        <div key={i} className="flex h-12">
          <RowHead n={i + 1} />
          <div className="w-[239px] shrink-0 border-r border-b border-[#111] bg-white" />
          <div className="flex w-[399px] shrink-0 border-r border-b border-[#111] bg-white">
            <div className={'flex h-[47px] flex-1 items-center pb-[3px] pl-[10px] ' + (i === 3 ? 'bg-[#454545] text-[#ddd]' : 'text-black')}>{y}</div>
          </div>
        </div>
      ))}
    </TableWindow>
  );
}

/* ---------- graph windows ---------- */

const series1 = [355, 741, 904, 1102, 1268, 1528, 1799, 2190, 2398, 2709, 2975, 3395, 3509, 3758, 4105, 4502, 4642, 4933, 5432, 5198, 5651, 6197, 6306, 6462, 6837, 7461, 7524, 7774, 7945, 8273, 8664, 8898, 9241, 9553, 10209, 10084, 10740, 10521, 11161, 11348, 11458, 11879, 11817, 12269, 12675, 13066, 13253, 13503, 13846, 13909, 14502];
const series2 = [355, 730, 891, 1115, 1258, 1536, 1807, 2201, 2388, 2716, 2981, 3403, 3512, 3746, 4137, 4527, 4652, 4917, 5432, 5260, 5682, 6197, 6322, 6463, 6790, 7462, 7508, 7758, 7930, 8226, 8664, 8882, 9241, 9553, 10193, 10100, 10802, 10568, 11177, 11348, 11458, 11926, 11832, 12285, 12660, 13081, 13315, 13596, 13909, 13909, 14502];

const TOP = 108;
const LEFT = 170;
const STEP_Y = 67.05;
const STEP_X = 131.1;

function Plot({ data, grid }: { data: number[]; grid: boolean }) {
  const bottom = TOP + STEP_Y * 8;
  const ys = Array.from({ length: 33 }, (_, i) => Math.round(TOP + (i * STEP_Y) / 4));
  const xs = Array.from({ length: 31 }, (_, i) => Math.round(LEFT + 2 + (i * STEP_X) / 5));
  const pts = data.map((v, i) => `${(LEFT + 1.5 + (1 + i * 10) * (STEP_X / 100)).toFixed(1)},${(bottom - (v * STEP_Y) / 2000).toFixed(1)}`).join(' ');
  return (
    <svg width="996" height="741" viewBox="0 0 996 741" fill="none">
      {grid && ys.map((y, i) =>
        i % 4 === 0
          ? i > 0 && i < 32 && <line key={i} x1={LEFT + 2} x2={LEFT + 790} y1={y + 0.5} y2={y + 0.5} stroke="#0000e6" />
          : i !== 1 && i !== 31 && <line key={i} x1={LEFT + 2} x2={LEFT + 788} y1={y + 0.5} y2={y + 0.5} stroke="#909090" strokeDasharray="1 2" />,
      )}
      <g stroke="#000" strokeWidth="2">
        <line x1={LEFT + 1} x2={LEFT + 1} y1={TOP - 1} y2={bottom + 1} />
        {ys.map((y, i) => <line key={i} x1={i % 4 === 0 ? LEFT - 18 : LEFT - 11} x2={LEFT} y1={y} y2={y} />)}
        <line x1={xs[0] - 1} x2={xs[30] + 1} y1={bottom + 2.6} y2={bottom + 2.6} strokeWidth="1.500" />
        {xs.map((x, i) => <line key={i} x1={x} x2={x} y1={bottom + 2} y2={bottom + (i % 5 === 0 ? 20 : 12)} />)}
      </g>
      <polyline points={pts} stroke="#000" strokeWidth="1" />
    </svg>
  );
}

type GraphProps = { title: string; legend: string; data: number[]; active?: boolean; grid?: boolean; place: string; box: string };

function GraphWindow({ title, legend, data, active, grid, place, box }: GraphProps) {
  return (
    <div className={'absolute h-[799px] w-[999px] overflow-hidden rounded-t-[14px] border border-[#8a8a8a] border-t-[#c4c4c4] bg-white text-[26px] ' + place}>
      <div className={'relative flex h-[55px] items-center justify-center ' + (active ? 'bg-gradient-to-b from-[#363636] to-[#757575]' : 'bg-[#303030]')}>
        <div className="absolute left-[16px]">
          {active ? (
            <div className="flex gap-5">
              <i className="h-6 w-6 rounded-full bg-[#ff5f57]" />
              <i className="h-6 w-6 rounded-full bg-[#febc2e]" />
              <i className="h-6 w-6 rounded-full bg-[#28c840]" />
            </div>
          ) : <GreyDots />}
        </div>
        <div className="mr-[41px] flex items-center gap-[12px] text-[#dcdcdc]">
          <svg width="28" height="28" viewBox="0 0 14 14" shapeRendering="crispEdges" fill="none" className="mb-1">
            <path d="M.5 .5h13v13H.5z" fill="#fff" stroke="#000" />
            <path d="M2 6h1V5h1V3h1V2h1V1h1v1h1v2h1v1h1v1h2v2h1V7h-1V6h-1V5h-2V4H8V3H7V2H6v1H5v1H4v1H3v2H2z" fill="#e11" />
            <path d="M2 11h1v-1h1V8h1V7h1V6h1v2h1v2h1v1h1V9h1V7h1V5h1v3h-1v1h-1v2h-1v1H9v-1H8V9H7V8H6v1H5v1H4v2H2z" fill="#22e" />
          </svg>
          <span className="tracking-[-0.01em]">{title}</span>
        </div>
      </div>
      <div className="relative h-[742px]">
        <Plot data={data} grid={!!grid} />
        <span className="absolute top-[10px] left-[9px] flex h-[30px] w-[23px] items-center justify-center rounded-t-[8px] bg-gradient-to-b from-[#f77800] to-[#da6400] pt-1.5 text-[25px] font-medium text-white">1</span>
        <div className={'absolute top-[123px] left-[191px] flex h-[56px] items-center border-2 border-black pl-[18px] text-black ' + box}>
          <i className="mr-[21px] h-0.5 w-[40px] bg-black" /><span>{legend}</span>
        </div>
        <div className="absolute top-[698px] left-[493px] leading-[36px] font-bold text-black tracking-[-0.01em]">X Axis Title</div>
        <div className="absolute top-[354px] left-[-74px] w-[200px] -rotate-90 text-center leading-[36px] font-bold text-black tracking-[-0.01em]">Y Axis Title</div>
        <svg className="absolute right-0 bottom-0" width="22" height="22" viewBox="0 0 22 22" stroke="#777" strokeWidth="1.500"><path d="M1 22L22 1M8 22L22 8M15 22l7-7" /></svg>
      </div>
    </div>
  );
}

/* ---------- dock ---------- */

const Tile = ({ children, className = '' }: { children?: React.ReactNode; className?: string }) => (
  <div className={'relative flex h-[88px] w-[88px] items-center justify-center overflow-hidden rounded-[20px] ' + className}>{children}</div>
);
const Finder = () => (
  <Tile className="bg-[#e4e8ee]">
    <svg width="88" height="88" viewBox="0 0 88 88" fill="none">
      <defs><linearGradient id="fi" x1="0" y1="0" x2="0" y2="1"><stop stopColor="#54c8f8" /><stop offset="1" stopColor="#2f6ff0" /></linearGradient></defs>
      <path d="M0 0h50C43 16 39 34 38 51h12c0 14 2 26 5 37H0z" fill="url(#fi)" />
      <path d="M23 26v7M64 26v7" stroke="#1b2430" strokeWidth="4" strokeLinecap="round" />
      <path d="M18 59c14 15 38 15 52 0" stroke="#111a24" strokeWidth="3.500" strokeLinecap="round" />
    </svg>
  </Tile>
);
const Safari = () => (
  <Tile className="bg-gradient-to-b from-white to-[#d6d6d8]">
    <svg width="88" height="88" viewBox="0 0 88 88">
      <defs><linearGradient id="sa" x1="0" y1="0" x2="0" y2="1"><stop stopColor="#3ea3f3" /><stop offset="1" stopColor="#2a63d6" /></linearGradient></defs>
      <circle cx="44" cy="44" r="38" fill="url(#sa)" />
      <circle cx="44" cy="44" r="33" fill="none" stroke="#fff" strokeOpacity=".75" strokeWidth="5" strokeDasharray="1 2.450" />
      <path d="M71 21L49 49l-10-10z" fill="#e63b30" /><path d="M71 21L49 49l-5-5z" fill="#c4302a" />
      <path d="M18 67l21-28 10 10z" fill="#f4f4f4" /><path d="M18 67l31-18-5-5z" fill="#cfd3d8" />
    </svg>
  </Tile>
);
const launch = ['bg-[#6fdc5a]', 'bg-[#f4b93e]', 'bg-[#ec8a2e]', 'bg-[#d02c22]', 'bg-[#98a4a8]', 'bg-[#ec4660]', 'bg-[#8a3fd0]', 'bg-[#2f8ff0]', 'bg-[#5fcda4]'];
const Launchpad = () => (
  <Tile className="bg-[#b1b1b6]">
    <div className="grid grid-cols-3 gap-[5px]">{launch.map((c) => <i key={c} className={'h-4 w-4 rounded-[4px] ' + c} />)}</div>
  </Tile>
);
const Calendar = () => (
  <Tile className="flex-col bg-[#f7f6f4]">
    <div className="flex h-7 w-full shrink-0 items-center justify-center bg-[#e25c50] pt-0.5 text-[18px] font-semibold text-white">МАРТ</div>
    <div className="flex h-[60px] items-center pb-1 text-[56px] font-light text-[#222]">1</div>
  </Tile>
);
const Xcode = () => (
  <div className="relative">
    <Tile className="bg-gradient-to-b from-[#4ab2ee] to-[#215cd8]">
      <svg width="88" height="88" viewBox="0 0 88 88" fill="none" stroke="#a8dcff" strokeWidth="2">
        <rect x="5" y="5" width="78" height="78" rx="16" /><circle cx="44" cy="44" r="34" strokeOpacity=".5" />
        <path d="M40 17l-22 50 6 4 22-46zM44 22l16 42 7-3-19-44z" /><path d="M12 52h62v6H12z" />
      </svg>
    </Tile>
    <svg className="absolute -top-3 left-0 overflow-visible" width="104" height="108" viewBox="0 0 104 108">
      <path d="M66 26l9 3-35 74c-2 4-14 2-13-3z" fill="#2a2c33" stroke="#111" /><path d="M72 24l-14 34" stroke="#8b929e" strokeWidth="4" />
      <path d="M50 8c10-6 24-4 32 4l4 6 7-1 4 4-3 9-5 3-5-6-8-3-14 3-3-6C58 12 56 9 50 8z" fill="#4a4d55" stroke="#15161a" />
      <path d="M58 8c8-2 16 1 21 6" stroke="#9aa0aa" strokeWidth="2.500" fill="none" />
    </svg>
  </div>
);
const ChromeMark = ({ s }: { s: number }) => (
  <svg width={s} height={s} viewBox="0 0 76 76">
    <circle cx="38" cy="38" r="37" fill="#f5be3f" />
    <path d="M38 38L6 19.500A37 37 0 0 0 36 75l18-28z" fill="#4ba052" />
    <path d="M38 38L6 19.500a37 37 0 0 1 64 0z" fill="#d94b3c" /><path d="M6 19.500A37 37 0 0 1 70 19.500H38l-16 28z" fill="#d94b3c" />
    <circle cx="38" cy="38" r="18.500" fill="#fff" /><circle cx="38" cy="38" r="14.500" fill="#3f74e0" />
  </svg>
);
const Plane2 = ({ s, className = '' }: { s: number; className?: string }) => (
  <svg width={s} height={s} viewBox="0 0 96 96" className={className}>
    <path d="M18 50L70 29l-5 42c-1 3-4 3-6 1L46 58l18-22-28 21-17-4c-2-1-2-2-1-3z" fill="#fff" />
    <path d="M46 58l-10-1 26-20z" fill="#c8dcec" />
  </svg>
);
const Telegram = () => (
  <div className="relative flex h-24 w-24 items-center justify-center rounded-full bg-gradient-to-b from-[#4ba3dc] to-[#337ab5]">
    <Plane2 s={96} />
    <span className="absolute -top-1.5 left-[58px] flex h-[41px] w-[48px] items-center justify-center rounded-full bg-[#e04c3e] text-[24px] text-white">..02</span>
  </div>
);
const AppStore = () => (
  <div className="flex h-[108px] w-[108px] items-center justify-center rounded-[24px] bg-white">
    <svg width="80" height="76" viewBox="0 0 80 76" fill="none" strokeWidth="9" strokeLinecap="round">
      <defs><linearGradient id="as" x1="0" y1="0" x2="0" y2="76" gradientUnits="userSpaceOnUse"><stop stopColor="#55b8fa" /><stop offset="1" stopColor="#3470ea" /></linearGradient></defs>
      <g stroke="url(#as)"><path d="M47 6L23 50M34 6l12 20M48 32l20 36M6 50.500h36M56 50.600h18M17 61l-4 7" /></g>
    </svg>
  </div>
);
const YouTube = () => (
  <div className="flex h-[74px] w-[107px] items-center justify-center rounded-[18px] bg-[#ea3323]">
    <svg width="28" height="34" viewBox="0 0 28 34"><path d="M1 0v34l27-17z" fill="#fff" /></svg>
  </div>
);
const Settings = () => (
  <Tile className="bg-gradient-to-b from-[#d3dce3] to-[#8d8d8d]">
    <svg width="84" height="84" viewBox="0 0 84 84" fill="none">
      <circle cx="42" cy="42" r="38" fill="#2c2c2e" /><circle cx="42" cy="42" r="34" stroke="#a9aeb2" strokeWidth="4" strokeDasharray="2 1.560" />
      <circle cx="42" cy="42" r="30" stroke="#b4b9bd" strokeWidth="4" /><circle cx="42" cy="42" r="21" fill="#77797b" stroke="#3a3a3c" strokeWidth="5" />
      <circle cx="42" cy="42" r="23" stroke="#a9aeb2" strokeWidth="2" strokeDasharray="2 1.500" />
      <path d="M42 42h29M42 42L27.500 17M42 42L27.500 67" stroke="#b9bec2" strokeWidth="4" /><circle cx="42" cy="42" r="3" fill="#444" stroke="#c7ccd0" strokeWidth="2" />
    </svg>
  </Tile>
);
const Spotify = () => (
  <div className="flex h-[90px] w-[90px] items-center justify-center rounded-full bg-[radial-gradient(circle,#121212_60%,#65d36e_61%)]"><FaSpotify size={90} className="text-[#65d36e]" /></div>
);
const GitHub = () => <Tile className="bg-gradient-to-b from-[#8a3dab] to-[#552c86]"><FaGithub size={76} className="text-[#f2eef6]" /></Tile>;
const Terminal = () => (
  <Tile className="border-[3px] border-[#b7c0c6] bg-black">
    <div className="h-[70px] w-[74px] rounded-[12px] bg-[#242424] pt-1 pl-1.5 font-['Liberation_Mono'] text-[24px] leading-[30px] font-bold text-white">&gt;_</div>
  </Tile>
);
function JetBrains({ kind, s = 98 }: { kind: 'CL' | 'RD'; s?: number }) {
  return (
    <svg width={s} height={s} viewBox="0 0 98 98">
      {kind === 'CL' ? (
        <g>
          <path d="M37 0L9 18 4 50l46 4z" fill="#68ec7c" /><path d="M37 0l23 16 8 26-32-8z" fill="#e8559c" />
          <path d="M60 18L84 4l14 30-20 22-24-10z" fill="#53d38c" /><path d="M84 4L76 30l22 4z" fill="#6ae38f" />
          <path d="M7 30L0 71l30-8 6-30z" fill="#49dca8" /><path d="M0 71l32 24 12-20-16-20z" fill="#2f9fdc" /><path d="M14 62l18 33 8-20z" fill="#49c0ee" />
          <path d="M98 61L82 98 42 81l14-22 22-4z" fill="#45e0ae" /><path d="M98 61L78 80v-26z" fill="#3388e8" /><path d="M60 72l22 26-4-30z" fill="#70f0c8" />
        </g>
      ) : (
        <g>
          <path d="M29 0L0 18l8 42 34-6z" fill="#dc3c62" /><path d="M29 0l30 24-12 20-32-26z" fill="#f27a3c" />
          <path d="M62 2L50 12l10 18 14-8z" fill="#2f7fe8" /><path d="M60 14l38 24-6 24-32-12z" fill="#c9285e" />
          <path d="M92 58l-16-6-6 18 20 8z" fill="#8a3a9c" /><path d="M6 40l5 46 22-20z" fill="#f06a4a" />
          <path d="M11 86l28 12 22-18-30-20z" fill="#f9a83e" /><path d="M11 86l22-20 6 32z" fill="#f58f38" />
          <path d="M98 80L69 98 52 78l28-22z" fill="#2450f0" />
        </g>
      )}
      <rect x="18" y="19" width="61" height="60" fill={kind === 'CL' ? '#06140f' : '#150c18'} />
      <text x="24" y="50" fill="#fff" fontFamily="Inter" fontWeight="700" fontSize="31" textLength={kind === 'CL' ? 40 : 46} lengthAdjust="spacingAndGlyphs">{kind}</text>
      <rect x="25" y="68" width="23" height="4" fill="#fff" />
    </svg>
  );
}
const Pencil = () => (
  <Tile className="bg-gradient-to-b from-[#4c83f8] to-[#2560ec]">
    <svg width="88" height="88" viewBox="0 0 88 88" stroke="#111" strokeWidth="2.500" strokeLinejoin="round">
      <path d="M18 71l5-25 19 16z" fill="#f6e3b8" /><path d="M18 71l2-9 6 5z" fill="#111" />
      <path d="M23 46l22-23 19 15-22 24z" fill="#f5b04a" /><path d="M29 51l22-23" /><path d="M36 57l22-24" />
      <path d="M45 23l4-5 20 15-5 6z" fill="#9c9ca4" /><path d="M49 18c6-8 28 4 20 15z" fill="#c4c4cc" />
    </svg>
  </Tile>
);
const SciDavis = () => (
  <svg width="108" height="108" viewBox="0 0 108 108" fill="none">
    <path d="M0 82c28 0 34-20 54-32s24-22 54-24" stroke="#fff" strokeWidth="26" /><path d="M0 82c28 0 34-20 54-32s24-22 54-24" stroke="#000" strokeWidth="20" />
    <path d="M29 2h50v16H64v72h15v16H29V90h15V18H29z" fill="#3459b8" stroke="#a9b9ea" strokeWidth="3.500" />
    <circle cx="54" cy="54" r="17" fill="url(#sd)" />
    <defs><radialGradient id="sd" cx=".55" cy=".35"><stop stopColor="#ffb0a0" /><stop offset=".5" stopColor="#cf2a20" /><stop offset="1" stopColor="#a01510" /></radialGradient></defs>
  </svg>
);
const DiskDocs = () => (
  <svg width="74" height="94" viewBox="0 0 74 94">
    <path d="M0 4h10v56H0zM60 8h12v50H60z" fill="#56acdf" /><path d="M8 0h56v50H8z" fill="#d8d8d8" />
    <path d="M1 5h44l26 24v65H1z" fill="#fff" /><path d="M45 2l26 24-20 4c-2-8-2-18-6-28z" fill="#e2e2e2" />
    <path d="M17 37h38l4 36v7H14v-7z" fill="#b4babd" /><rect x="22" y="38" width="28" height="7" fill="#333" />
    <circle cx="36" cy="58" r="14" fill="#c6cbce" stroke="#989ea2" /><circle cx="36" cy="58" r="4" fill="#dfe3e5" stroke="#999" /><path d="M14 74h45v6H14z" fill="#555" />
  </svg>
);
const Thumb = ({ children, className }: { children: React.ReactNode; className: string }) => (
  <div className="relative">
    <div className={'h-[54px] w-[101px] overflow-hidden ' + className} />
    <div className="absolute right-0 -bottom-[23px]">{children}</div>
  </div>
);
const TgThumb = () => (
  <div className="relative">
    <div className="flex h-[54px] w-[101px] bg-[#17212b]">
      <div className="w-1 bg-[#0e1621]" />
      <div className="flex w-[26px] flex-col justify-between py-1 pl-0.5">
        {['bg-[#e08a3a]', 'bg-[#888]', 'bg-[#5aa0e0]', 'bg-[#d04a3a]', 'bg-[#e0a040]', 'bg-[#e8c060]', 'bg-[#8ab]', 'bg-[#6cf]'].map((c) => (
          <div key={c} className="flex items-center gap-0.5"><i className={'h-1 w-1 rounded-full ' + c} /><i className="h-0.5 w-4 bg-[#46525e]" /></div>
        ))}
      </div>
      <div className="w-[47px] bg-[#0e1621] pt-2 pl-3.5"><div className="h-[17px] w-[33px] bg-[#e4e8ec]" /><div className="mt-0.5 h-[18px] w-[33px] bg-[#2b5278]" /></div>
      <div className="grid flex-1 content-start grid-cols-3 gap-px pt-2.5 pl-0.5">
        {['bg-[#c33]', 'bg-[#a99]', 'bg-[#a66]', 'bg-[#943]', 'bg-[#cba]', 'bg-[#654]', 'bg-[#a32]', 'bg-[#333]', 'bg-[#c96]', 'bg-[#a33]', 'bg-[#caa]', 'bg-[#853]'].map((c) => <i key={c} className={'h-1.5 ' + c} />)}
      </div>
    </div>
    <div className="absolute right-0 -bottom-[23px] flex h-9 w-9 items-center justify-center rounded-full bg-[#3e92cc]"><Plane2 s={36} /></div>
  </div>
);
const Trash = () => (
  <svg width="78" height="102" viewBox="0 0 78 102">
    <defs><linearGradient id="tr" x1="0" x2="1"><stop stopColor="#55595c" /><stop offset=".3" stopColor="#8b9093" /><stop offset=".55" stopColor="#6d7275" /><stop offset="1" stopColor="#9ba0a3" /></linearGradient></defs>
    <path d="M2 14h74l-9 80c-6 9-50 9-56 0z" fill="url(#tr)" />
    <path d="M1 14c10 12 66 12 76 0l-4-4H5z" fill="#75797c" />
    <path d="M6 16l6-12 10 3 6-7 10 8 12-6 8 6 8-1 8 9-8 6-14 1-8 4-10-4-8 4-10-6z" fill="#e9e9e9" />
    <path d="M14 6l12 8-6 6zM40 8l10-4-2 16zM60 8l6 10-12 2z" fill="#8b8580" /><path d="M24 12l8-4 4 8-8 4z" fill="#38b6d8" /><path d="M50 14l6-4 3 8z" fill="#a0402f" />
  </svg>
);
const DockSep = () => <div className="h-[102px] w-0.5 bg-white/30" />;

const dock: Cell[] = [
  [61, 88, <Finder />],
  [179, 88, <Safari />],
  [295.5, 88, <Launchpad />],
  [411, 88, <Calendar />],
  [529.5, 88, <Xcode />],
  [645, 88, <Tile className="bg-[#f4f4f5]"><ChromeMark s={76} /></Tile>],
  [761, 96, <Telegram />],
  [879, 108, <AppStore />],
  [995.5, 108, <YouTube />],
  [1111, 88, <Settings />],
  [1227, 90, <Spotify />],
  [1314, 2, <DockSep />],
  [1397, 88, <GitHub />],
  [1513, 88, <Terminal />],
  [1630.5, 98, <JetBrains kind="CL" />],
  [1747, 98, <JetBrains kind="RD" />],
  [1863.5, 88, <Pencil />],
  [1981, 108, <SciDavis />],
  [2066, 2, <DockSep />],
  [2149, 74, <DiskDocs />],
  [2265, 101, <Thumb className="bg-[#352b2a]"><span className="mr-0.5 flex h-8 w-8 items-center justify-center rounded-[7px] bg-white"><ChromeMark s={28} /></span></Thumb>],
  [2382, 101, <Thumb className="bg-black"><JetBrains kind="CL" s={36} /></Thumb>],
  [2498, 101, <TgThumb />],
  [2615, 78, <Trash />],
];
const running = [61, 645, 761, 1227, 1397, 1513, 1631, 1747, 1863, 1981];

function Dock() {
  return (
    <div className="mx-[99px] mt-[5px] flex h-[140px] flex-col rounded-[42px] border-2 border-white/20 bg-[linear-gradient(90deg,#19202a_0%,#1b1d27_10%,#331824_20%,#4b1b27_34%,#52202a_40%,#441829_50%,#431a2b_62%,#4c1a31_72%,#541e28_82%,#6a2218_92%,#6f2518_100%)]">
      <div className="h-[125px] pt-px"><Strip items={dock} /></div>
      <div className="h-2"><Strip items={running.map((x): Cell => [x, 8, <i className="h-2 w-2 rounded-full bg-[#c79aae]" />])} /></div>
    </div>
  );
}

export default function App() {
  return (
    <div className="flex h-[1800px] w-[2880px] flex-col overflow-hidden bg-[linear-gradient(90deg,#03101d_0%,#04101c_20%,#24091a_23%,#37101a_36%,#2d0519_50%,#3a0f35_65%,#4d1020_78%,#7a2315_92%,#8c2a14_100%)] font-[Inter,'Liberation_Sans',sans-serif]">
      <MenuBar />
      <div className="mt-[2px] flex h-[1596px] w-[2878px] shrink-0 flex-col overflow-hidden rounded-[20px] bg-[#a7a7a7] shadow-[0_0_0_1px_#000,0_14px_40px_rgba(0,0,0,.6)]">
        <div className="relative flex h-[56px] shrink-0 items-center justify-center rounded-t-[20px] border-t-2 border-[#7a706e] bg-[#403635] pb-1 text-[26px] font-bold text-[#b8afad]">
          <div className="absolute left-[16px] flex gap-4">
            <i className="h-6 w-6 rounded-full bg-[#ed6a5e]" />
            <i className="h-6 w-6 rounded-full bg-[#f4bf4f]" />
            <i className="h-6 w-6 rounded-full bg-[#61c554]" />
          </div>
          <span className="tracking-[0.008em]">SciDAVis - untitled</span>
        </div>
        <div className="h-[68px] shrink-0 border-t border-b-2 border-black border-b-[#adadad] bg-gradient-to-b from-[#efefef] to-[#c8c8c8]"><Strip items={toolbar1} /></div>
        <div className="h-[64px] shrink-0 border-t-2 border-b-2 border-white border-b-[#adadad] bg-gradient-to-b from-[#efefef] to-[#c8c8c8]"><Strip items={toolbar2} /></div>
        <div className="relative h-[1266px] shrink-0 overflow-hidden bg-[#a7a7a7]">
          <Table1 />
          <Table2 />
          <GraphWindow title="Graph4" legend="Table1_2" data={series1} grid place="left-[677px] top-[456px]" box="w-[207px]" />
          <GraphWindow title="Graph5" legend="Table2_2" data={series2} active place="left-[1677px] top-[454px]" box="w-[212px]" />
        </div>
        <div className="h-[88px] shrink-0 border-t-2 border-b-2 border-white border-b-[#b0b0b0] bg-gradient-to-b from-[#efefef] to-[#c6c6c6] pt-0.5"><Strip items={toolbar3} /></div>
        <div className="flex-1 border-t-2 border-[#757575] bg-gradient-to-b from-[#e6e6e6] to-[#9e9e9e] pt-2 pl-1">
          <div className="h-full w-full border-t-2 border-l border-[#8a8a8a]" />
        </div>
      </div>
      <Dock />
    </div>
  );
}
